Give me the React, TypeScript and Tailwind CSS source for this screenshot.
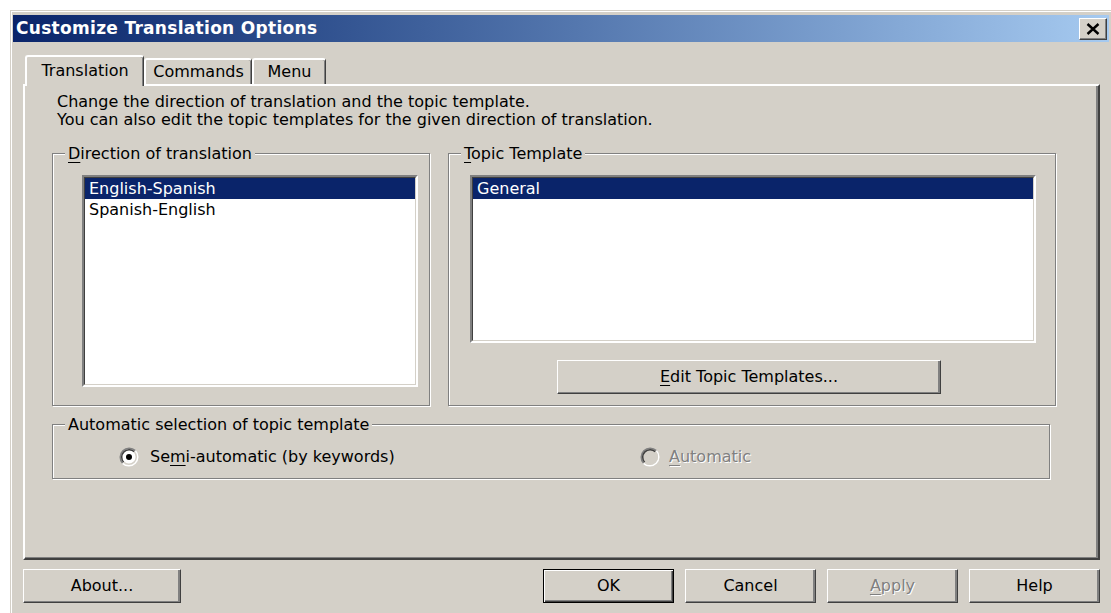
import type { ReactNode } from 'react';

// Classic Win9x/2000 dialog palette
const face = 'bg-[#d4d0c8]';

function Key({ children }: { children: ReactNode }) {
  return <span className="underline underline-offset-[3px] decoration-1">{children}</span>;
}

interface ButtonProps {
  children: ReactNode;
  width: string;
  isDefault?: boolean;
  disabled?: boolean;
}

function Button({ children, width, isDefault, disabled }: ButtonProps) {
  const edge = isDefault
    ? 'border border-black shadow-[inset_1px_1px_0_#fff,inset_-1px_-1px_0_#404040,inset_-2px_-2px_0_#808080]'
    : 'border border-t-white border-l-white border-r-[#404040] border-b-[#404040] shadow-[inset_-1px_-1px_0_#808080,inset_-2px_0_0_#808080]';
  return (
    <div
      className={`${width} h-[34px] ${face} ${edge} flex items-center justify-center text-[16px] ${
        disabled ? 'text-[#808080] [text-shadow:1px_1px_0_#fff]' : 'text-black'
      }`}
    >
      {children}
    </div>
  );
}

function GroupBox({ title, className, children }: { title: ReactNode; className: string; children?: ReactNode }) {
  return (
    <div className={`${className} border border-[#808080] shadow-[inset_1px_1px_0_#fff,1px_1px_0_#fff] flex flex-col`}>
      <div className={`-mt-[9px] ml-[12px] px-[3px] w-fit leading-[18px] ${face}`}>{title}</div>
      {children}
    </div>
  );
}

function ListBox({ items, className }: { items: string[]; className: string }) {
  return (
    <div className={`${className} border-2 border-t-[#808080] border-l-[#808080] border-r-white border-b-white`}>
      <div className="h-full border border-t-[#404040] border-l-[#404040] border-r-[#d4d0c8] border-b-[#d4d0c8] bg-white">
        {items.map((item, i) => (
          <div
            key={item}
            className={`h-[21px] leading-[21px] pl-[4px] ${i === 0 ? 'bg-[#0a246a] text-white' : 'text-black'}`}
          >
            {item}
          </div>
        ))}
      </div>
    </div>
  );
}

function Radio({ checked, disabled }: { checked?: boolean; disabled?: boolean }) {
  return (
    <svg width="20" height="20" viewBox="0 0 20 20" className="shrink-0">
      <circle cx="10" cy="10" r="8.5" fill={disabled ? '#d4d0c8' : '#fff'} />
      <path d="M16.36 3.64 A9 9 0 0 0 3.64 16.36" fill="none" stroke="#808080" strokeWidth="1.5" />
      <path d="M15.3 4.7 A7.5 7.5 0 0 0 4.7 15.3" fill="none" stroke="#404040" strokeWidth="1.5" />
      <path d="M3.64 16.36 A9 9 0 0 0 16.36 3.64" fill="none" stroke="#fff" strokeWidth="1.5" />
      <path d="M4.7 15.3 A7.5 7.5 0 0 0 15.3 4.7" fill="none" stroke="#d4d0c8" strokeWidth="1.5" />
      {checked && <circle cx="10" cy="10" r="3" fill="#000" />}
    </svg>
  );
}

function Tab({ label, active, width }: { label: string; active?: boolean; width: string }) {
  return (
    <div
      className={`${width} ${face} flex items-center justify-center rounded-t-[3px] border-l-2 border-t-2 border-r border-l-white border-t-white border-r-[#404040] shadow-[inset_-1px_0_0_#808080] ${
        active ? 'h-[31px] -mb-[2px] relative z-10 pb-[2px]' : 'h-[26px]'
      }`}
    >
      {label}
    </div>
  );
}

export default function App() {
  return (
    <div className="w-[1111px] h-[613px] overflow-hidden bg-white pl-[10px] pt-[10px] font-['DejaVu_Sans',sans-serif] text-[16px] text-black">
      <div className={`w-[1101px] h-[620px] ${face} border-l border-t border-[#d4d0c8]`}>
        <div className="h-full border-l border-t border-white flex flex-col">
          {/* caption */}
          <div className="ml-[1px] mr-[2px] mt-[3px] h-[27px] bg-gradient-to-r from-[#0a246a] to-[#a6caf0] flex items-center justify-between pl-[3px] pr-[2px]">
            <span className="text-white font-bold text-[17px] tracking-[0.3px]">Customize Translation Options</span>
            <div className="w-[28px] h-[22px] bg-[#d4d0c8] border border-t-white border-l-white border-r-[#404040] border-b-[#404040] shadow-[inset_-1px_-1px_0_#808080] flex items-center justify-center">
              <svg width="16" height="12" viewBox="0 0 16 12">
                <path d="M2.5 1 L13.5 11 M13.5 1 L2.5 11" stroke="#000" strokeWidth="2.4" />
              </svg>
            </div>
          </div>

          <div className="flex flex-col pl-[11px] pr-[11px]">
            {/* tabs */}
            <div className="mt-[13px] h-[29px] flex items-end pl-[2px]">
              <Tab label="Translation" active width="w-[119px]" />
              <Tab label="Commands" width="w-[108px]" />
              <Tab label="Menu" width="w-[74px]" />
            </div>

            {/* tab page */}
            <div className="h-[476px] border-t-2 border-l-2 border-r-2 border-b-2 border-t-white border-l-white border-r-[#404040] border-b-[#404040] shadow-[inset_-2px_0_0_#808080,inset_0_-1px_0_#808080] pt-[7px] pl-[27px] flex flex-col">
              <div className="ml-[5px] leading-[18px]">
                <p>Change the direction of translation and the topic template.</p>
                <p>You can also edit the topic templates for the given direction of translation.</p>
              </div>

              <div className="mt-[24px] flex gap-[18px]">
                <GroupBox
                  className="w-[378px] h-[253px]"
                  title={
                    <>
                      <Key>D</Key>irection of translation
                    </>
                  }
                >
                  <ListBox className="mt-[12px] ml-[29px] w-[336px] h-[212px]" items={['English-Spanish', 'Spanish-English']} />
                </GroupBox>

                <GroupBox
                  className="w-[608px] h-[253px]"
                  title={
                    <>
                      <Key>T</Key>opic Template
                    </>
                  }
                >
                  <ListBox className="mt-[12px] ml-[21px] w-[566px] h-[168px]" items={['General']} />
                  <div className="mt-[17px] ml-[108px]">
                    <Button width="w-[384px]">
                      <span>
                        <Key>E</Key>dit Topic Templates...
                      </span>
                    </Button>
                  </div>
                </GroupBox>
              </div>

              <GroupBox className="mt-[18px] w-[998px] h-[55px]" title="Automatic selection of topic template">
                <div className="mt-[11px] ml-[66px] flex items-center">
                  <div className="w-[521px] flex items-center gap-[11px]">
                    <Radio checked />
                    <span>
                      Se<Key>m</Key>i-automatic (by keywords)
                    </span>
                  </div>
                  <div className="flex items-center gap-[9px] text-[#808080] [text-shadow:1px_1px_0_#fff]">
                    <Radio disabled />
                    <span>
                      <Key>A</Key>utomatic
                    </span>
                  </div>
                </div>
              </GroupBox>
            </div>

            {/* dialog buttons */}
            <div className="mt-[9px] flex justify-between">
              <Button width="w-[158px]">About...</Button>
              <div className="flex gap-[11px]">
                <Button width="w-[131px]" isDefault>
                  OK
                </Button>
                <Button width="w-[131px]">Cancel</Button>
                <Button width="w-[131px]" disabled>
                  <span>
                    <Key>A</Key>pply
                  </span>
                </Button>
                <Button width="w-[131px]">Help</Button>
              </div>
            </div>
          </div>
        </div>
      </div>
    </div>
  );
}
